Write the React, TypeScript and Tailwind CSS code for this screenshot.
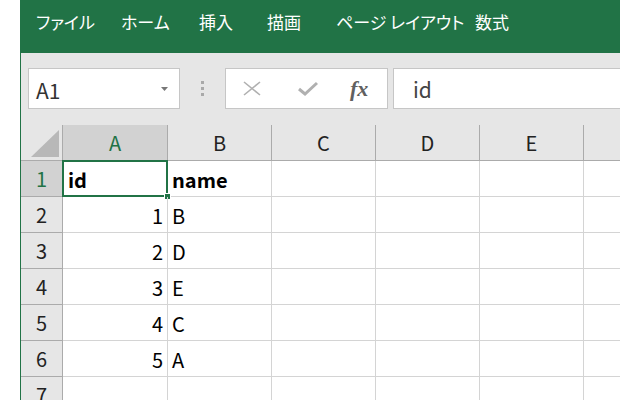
import React from "react";

const tabs = [
  { label: "ファイル", w: "w-[85px]" },
  { label: "ホーム", w: "w-[78px]" },
  { label: "挿入", w: "w-[68px]" },
  { label: "描画", w: "w-[69px]" },
  { label: "ページ レイアウト", w: "w-[139px]" },
  { label: "数式", w: "w-[80px]" },
];

const rows = [
  { n: 1, a: "id", b: "name", head: true },
  { n: 2, a: "1", b: "B" },
  { n: 3, a: "2", b: "D" },
  { n: 4, a: "3", b: "E" },
  { n: 5, a: "4", b: "C" },
  { n: 6, a: "5", b: "A" },
  { n: 7, a: "", b: "" },
];

const cols = ["A", "B", "C", "D", "E", ""];

export default function App() {
  return (
    <div className="w-[620px] h-[400px] overflow-hidden flex bg-white font-['Noto_Sans_CJK_JP',sans-serif]">
      <div className="w-[20px] shrink-0 bg-white" />
      <div className="flex-1 flex flex-col border-l border-[#217346] min-w-0">
        {/* ribbon tabs */}
        <div className="h-[53px] shrink-0 bg-[#217346] flex items-start pt-[10px] pl-[15px] text-white text-[17px] leading-[24px] [font-feature-settings:'palt']">
          {tabs.map(t => (
            <div key={t.label} className={`${t.w} shrink-0 whitespace-nowrap`}>{t.label}</div>
          ))}
        </div>

        {/* formula bar */}
        <div className="h-[72px] shrink-0 bg-[#e6e6e6] flex items-start pt-[15px] pl-[7px]">
          <div className="w-[152px] h-[41px] shrink-0 bg-white border border-[#c6c6c6] flex items-center justify-between pl-[7px] pr-[11px]">
            <span className="text-[21px] text-[#333] leading-none pt-[3px]">A1</span>
            <svg width="7" height="4" viewBox="0 0 7 4"><path d="M0 0h7L3.5 4z" fill="#777" /></svg>
          </div>
          <div className="w-[45px] h-[41px] shrink-0 flex flex-col items-center justify-center gap-[3px]">
            <div className="w-[3px] h-[3px] bg-[#a9a9a9]" />
            <div className="w-[3px] h-[3px] bg-[#a9a9a9]" />
            <div className="w-[3px] h-[3px] bg-[#a9a9a9]" />
          </div>
          <div className="w-[163px] h-[41px] shrink-0 bg-white border border-[#c6c6c6] flex items-center pl-[17px]">
            <svg width="18" height="15" viewBox="0 0 18 15" className="shrink-0">
              <path d="M1 1l16 13M17 1L1 14" stroke="#b0b0b0" strokeWidth="1.6" fill="none" />
            </svg>
            <svg width="20" height="15" viewBox="0 0 20 15" className="shrink-0 ml-[37px]">
              <path d="M1 8l6 5L19 2" stroke="#b0b0b0" strokeWidth="3" fill="none" />
            </svg>
            <span className="ml-[32px] font-['Liberation_Serif',serif] italic font-bold text-[22px] text-[#606060] leading-none">fx</span>
          </div>
          <div className="ml-[5px] flex-1 h-[41px] bg-white border border-r-0 border-[#c6c6c6] flex items-center pl-[19px]">
            <span className="text-[21px] text-[#444] leading-none pt-[1px]">id</span>
          </div>
        </div>

        {/* grid */}
        <div className="grid grid-cols-[42px_105px_104px_104px_104px_104px_1fr] auto-rows-[36px] text-[20px] text-black">
          {/* header row */}
          <div className="bg-[#e6e6e6] border-r border-b border-[#ababab] flex items-end justify-end pr-[3px] pb-[3px]">
            <svg width="28" height="27" viewBox="0 0 28 27"><path d="M28 0V27H0z" fill="#b8b8b8" /></svg>
          </div>
          {cols.map((c, i) => (
            <div
              key={i}
              className={`border-b border-[#ababab] flex items-center justify-center ${i < 5 ? "border-r" : ""} ${i === 0 ? "bg-[#d2d2d2] text-[#217346]" : "bg-[#e6e6e6] text-[#222]"}`}
            >
              {c}
            </div>
          ))}

          {rows.map(r => (
            <React.Fragment key={r.n}>
              <div className={`border-r border-b border-[#ababab] flex items-center justify-center ${r.n === 1 ? "bg-[#d2d2d2] text-[#217346]" : "bg-[#e6e6e6] text-[#222]"}`}>
                {r.n}
              </div>
              <div className={`relative border-r border-b border-[#d4d4d4] flex items-center leading-none pt-[2px] ${r.head ? "font-bold pl-[5px]" : "justify-end pr-[4px]"}`}>
                {r.a}
                {r.n === 1 && (
                  <>
                    <div className="absolute left-[-1px] top-[-1px] right-[-1px] bottom-[-1px] border-2 border-[#217346]" />
                    <div className="absolute right-[-4px] bottom-[-4px] w-[7px] h-[7px] bg-[#217346] border border-white" />
                  </>
                )}
              </div>
              <div className={`border-r border-b border-[#d4d4d4] flex items-center leading-none pt-[2px] pl-[4px] ${r.head ? "font-bold" : ""}`}>
                {r.b}
              </div>
              <div className="border-r border-b border-[#d4d4d4]" />
              <div className="border-r border-b border-[#d4d4d4]" />
              <div className="border-r border-b border-[#d4d4d4]" />
              <div className="border-b border-[#d4d4d4]" />
            </React.Fragment>
          ))}
        </div>
      </div>
    </div>
  );
}
